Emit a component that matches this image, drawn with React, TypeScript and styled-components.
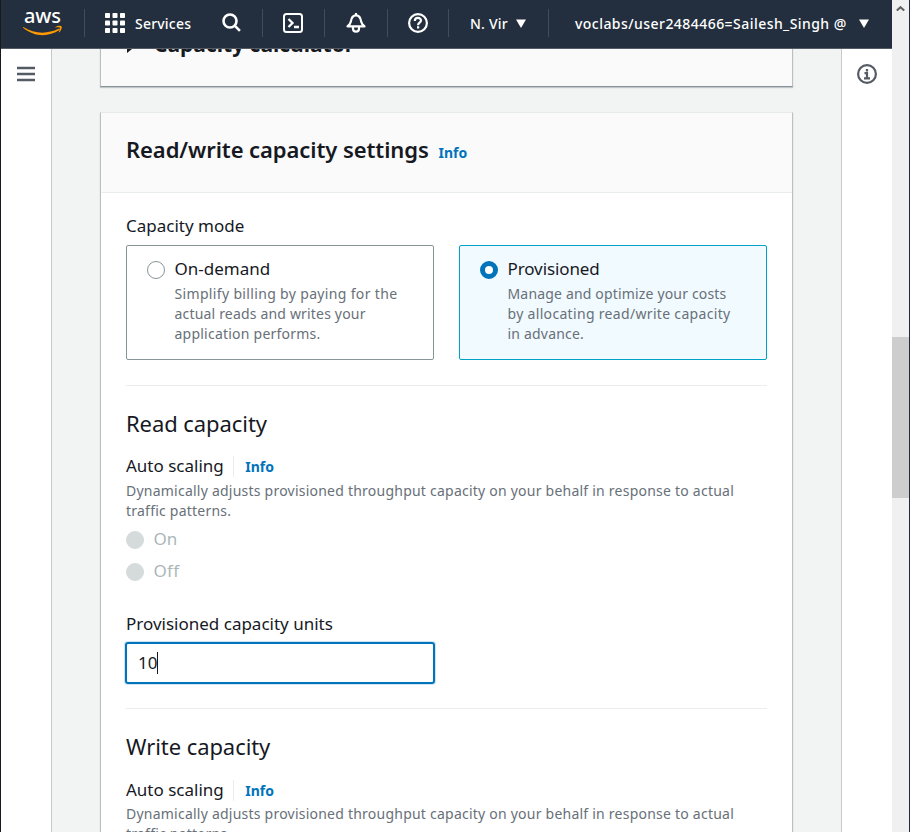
import React from "react";
import styled, { createGlobalStyle } from "styled-components";

const GlobalStyle = createGlobalStyle`
  * { box-sizing: border-box; }
  body { margin: 0; overflow: hidden; font-family: "Noto Sans", "Open Sans", sans-serif; color: #16191f; }
`;

const Page = styled.div`
  display: flex;
  width: 100vw;
  height: 832px;
  overflow: hidden;
  background: #fff;
  border-left: 1px solid #16191f;
  border-right: 1px solid #1c2b4a;
`;

const Console = styled.div`
  display: flex;
  flex-direction: column;
  flex: 1;
  min-width: 0;
`;

const TopNav = styled.header`
  display: flex;
  align-items: center;
  flex: none;
  height: 49px;
  padding: 0 0 2px 22px;
  background: #232f3e;
  border-bottom: 1px solid #545b64;
  color: #fff;
  font-size: 14px;
  font-weight: 500;
  line-height: 20px;
  white-space: nowrap;
  svg { display: block; flex: none; }
`;

const NavDivider = styled.span<{ $before: number; $after: number }>`
  flex: none;
  width: 1px;
  height: 28px;
  margin: 0 ${(p) => p.$after}px 0 ${(p) => p.$before}px;
  background: #414d5c;
`;

const NavLabel = styled.span<{ $gap: number; $spacing: number; $width: number }>`
  flex: none;
  width: ${(p) => p.$width}px;
  margin-left: ${(p) => p.$gap}px;
  letter-spacing: ${(p) => p.$spacing}px;
  padding-top: 1px;
`;

const Body = styled.div`
  display: flex;
  flex: 1;
  min-height: 0;
`;

const Rail = styled.aside<{ $side: "left" | "right" }>`
  flex: none;
  width: 51px;
  padding: ${(p) => (p.$side === "left" ? "17px 0 0 16px" : "15px 0 0 15px")};
  background: #fff;
  border: 0 solid #c5cacd;
  border-width: ${(p) => (p.$side === "left" ? "0 1px 0 0" : "0 0 0 1px")};
  svg { display: block; }
`;

const Main = styled.main`
  flex: 1;
  min-width: 0;
  padding: 0 48px;
  overflow: hidden;
  background: #f2f3f3;
`;

const Panel = styled.section`
  background: #fff;
  border: 1px solid #d5dbdb;
  border-color: #e6eaea #b9c0c3 #879196;
  box-shadow: 0 1px 1px rgba(0, 28, 36, 0.2);
`;

const CalculatorPanel = styled(Panel)`
  display: flex;
  align-items: flex-start;
  gap: 17px;
  height: 83px;
  margin-top: -45px;
  padding: 25px 26px;
  background: #fafafa;
  svg { flex: none; margin-top: 7px; }
`;

const CalculatorTitle = styled.h2`
  margin: 0;
  font-size: 21px;
  font-weight: 700;
  line-height: 28px;
`;

const SettingsPanel = styled(Panel)`
  margin-top: 25px;
  height: 1100px;
`;

const PanelHeader = styled.div`
  display: flex;
  align-items: baseline;
  height: 80px;
  padding: 22px 25px 0;
  background: #fafafa;
  border-bottom: 1px solid #eaeded;
`;

const PanelTitle = styled.h2`
  width: 312.5px;
  margin: 0;
  font-size: 22px;
  font-weight: 600;
  line-height: 28px;
  letter-spacing: -0.08px;
`;

const InfoLink = styled.a`
  color: #0073bb;
  font-size: 14px;
  font-weight: 700;
  line-height: 22px;
`;

const PanelBody = styled.div`
  padding: 22px 25px 0;
`;

const Label = styled.div<{ $spacing?: number }>`
  font-size: 17px;
  line-height: 22px;
  letter-spacing: ${(p) => p.$spacing ?? 0}px;
  white-space: nowrap;
`;

const Tiles = styled.div`
  display: grid;
  grid-template-columns: 308px 308px;
  gap: 25px;
  margin-top: 8px;
`;

const Tile = styled.div<{ $selected?: boolean }>`
  display: flex;
  gap: 9.5px;
  height: 115px;
  padding: 12px 20px;
  border: 1px solid ${(p) => (p.$selected ? "#00a1c9" : "#879596")};
  border-radius: 2px;
  background: ${(p) => (p.$selected ? "#f1faff" : "#fff")};
`;

const Radio = styled.span<{ $state?: "selected" | "disabled" }>`
  flex: none;
  width: 18px;
  height: 18px;
  margin-top: 3px;
  border-radius: 50%;
  border: ${(p) =>
    p.$state === "selected" ? "5px solid #0073bb" : p.$state === "disabled" ? "1px solid #d5dbdb" : "1px solid #879596"};
  background: ${(p) => (p.$state === "disabled" ? "#d5dbdb" : "#fff")};
`;

const Description = styled.div<{ $top: number }>`
  margin-top: ${(p) => p.$top}px;
  color: #687078;
  font-size: 14px;
  line-height: 20px;
  white-space: nowrap;
`;

const Line = styled.div<{ $spacing: number }>`
  letter-spacing: ${(p) => p.$spacing}px;
`;

const Rule = styled.hr<{ $top: number }>`
  height: 1px;
  margin: ${(p) => p.$top}px 0 0;
  border: 0;
  background: #eaeded;
`;

const SectionTitle = styled.h3`
  margin: 23px 0 0;
  font-size: 22px;
  font-weight: 400;
  line-height: 28px;
  letter-spacing: -0.07px;
`;

const ScalingHeader = styled.div<{ $top: number }>`
  display: flex;
  align-items: baseline;
  height: 22px;
  margin-top: ${(p) => p.$top}px;
`;

const LabelDivider = styled.span`
  align-self: flex-end;
  width: 1px;
  height: 21px;
  margin: 0 11px 0 9.4px;
  background: #eaeded;
`;

const RadioList = styled.div`
  display: grid;
  gap: 10px;
  margin-top: 7px;
`;

const RadioRow = styled.div`
  display: flex;
  gap: 9.5px;
  height: 22px;
  color: #aab7b8;
  ${Radio} { margin-top: 2.5px; }
`;

const UnitsLabel = styled(Label)`
  margin-top: 31px;
`;

const UnitsField = styled.div`
  display: flex;
  align-items: center;
  width: 310px;
  height: 42px;
  margin: 7px 0 0 -1px;
  padding-left: 11px;
  border: 2px solid #0073bb;
  border-radius: 3px;
  box-shadow: 0 0 0 1px rgba(0, 115, 187, 0.2);
  font-size: 17px;
  line-height: 22px;
`;

const Caret = styled.span`
  width: 1px;
  height: 22px;
  background: #16191f;
`;

const ScrollTrack = styled.div`
  flex: none;
  width: 17px;
  padding-top: 6px;
  background: #f0f0f0;
  svg { display: block; margin: 0 auto; }
`;

const ScrollThumb = styled.div`
  height: 161px;
  margin-top: 326px;
  background: #cdcdcd;
`;

const AwsLogo = () => (
  <svg width="42" height="30" viewBox="0 0 42 30" overflow="visible">
    <text x="1" y="15" fill="#fff" fontSize="20" fontWeight="500" textLength="37" fontFamily="Noto Sans, sans-serif">aws</text>
    <g transform="translate(-.7 -1.8)" fill="#f90">
      <path d="M1 20.8C12 27.7 25 28.2 36.3 22.6c1-.4 1.7.7.8 1.3C26 31.2 11.5 30.6 1.1 21.8c-.6-.6-.6-1.2-.1-1Z" />
      <path d="M33.2 20.7c2.2-1.5 5.3-1.4 6-.7.7.9-.3 4.5-2.2 6.1-.4.3-.7.1-.5-.3.7-1.6 1.4-3.8 1-4.3-.4-.6-2.5-.4-3.9-.2-.5 0-.7-.3-.4-.6Z" />
    </g>
  </svg>
);

const GridIcon = () => (
  <svg width="20" height="20" fill="#fff">
    {[0, 7.5, 15].map((y) => [0, 7.5, 15].map((x) => <rect key={`${x}-${y}`} x={x} y={y} width="5" height="5" rx=".8" />))}
  </svg>
);

const SearchIcon = () => (
  <svg width="20" height="20" fill="none" stroke="#fff" strokeWidth="2.6">
    <circle cx="8" cy="8" r="6.5" />
    <path d="m12.7 12.7 5.2 5.2" />
  </svg>
);

const ShellIcon = () => (
  <svg width="20" height="20" fill="none" stroke="#fff" strokeWidth="2">
    <rect x="1" y="1" width="18" height="18" rx="2.5" />
    <path d="m5.5 6 4 4-4 4M11 14h5" strokeWidth="2.3" />
  </svg>
);

const BellIcon = () => (
  <svg width="20" height="20" fill="none" stroke="#fff" strokeWidth="2.2" strokeLinejoin="round">
    <path d="M10 0v3M1.5 13.4h17c-2-1.7-2.9-2.7-3.3-4.6C14.7 5 13.2 2.3 10 2.3S5.3 5 4.8 8.8c-.4 1.9-1.3 2.9-3.3 4.6Z" />
    <path d="M7 14v1.8c0 3.7 6 3.7 6 0V14" />
  </svg>
);

const HelpIcon = () => (
  <svg width="20" height="20" fill="none" stroke="#fff" strokeWidth="2.2">
    <circle cx="10" cy="10" r="8.9" />
    <path d="M6.8 8C6.8 3.9 13 4 13 7.5c0 2.2-2.9 2.2-2.9 4.7M10.1 13.3v2.2" />
  </svg>
);

const Arrow = () => (
  <svg width="10" height="9"><path d="M0 .5h10L5 9Z" fill="#fff" /></svg>
);

interface CapacitySectionProps { title: string; headerTop: number; descriptionTop: number }

const CapacitySection = ({ title, headerTop, descriptionTop }: CapacitySectionProps) => (
  <>
    <SectionTitle>{title}</SectionTitle>
    <ScalingHeader $top={headerTop}>
      <Label>Auto scaling</Label>
      <LabelDivider />
      <InfoLink>Info</InfoLink>
    </ScalingHeader>
    <Description $top={descriptionTop}>
      <Line $spacing={0.23}>Dynamically adjusts provisioned throughput capacity on your behalf in response to actual</Line>
      <Line $spacing={0.23}>traffic patterns.</Line>
    </Description>
    <RadioList>
      <RadioRow><Radio $state="disabled" /><Label>On</Label></RadioRow>
      <RadioRow><Radio $state="disabled" /><Label $spacing={0.3}>Off</Label></RadioRow>
    </RadioList>
    <UnitsLabel>Provisioned capacity units</UnitsLabel>
    <UnitsField>10<Caret /></UnitsField>
  </>
);

export default function App() {
  return (
    <>
      <GlobalStyle />
      <Page>
        <Console>
          <TopNav>
            <AwsLogo />
            <NavDivider $before={19} $after={20} />
            <GridIcon />
            <NavLabel $gap={10} $spacing={0.2} $width={87}>Services</NavLabel>
            <SearchIcon />
            <NavDivider $before={20} $after={20} />
            <ShellIcon />
            <NavDivider $before={21} $after={21} />
            <BellIcon />
            <NavDivider $before={21} $after={20} />
            <HelpIcon />
            <NavDivider $before={20} $after={21} />
            <NavLabel $gap={0} $spacing={0.2} $width={46}>N. Vir</NavLabel>
            <Arrow />
            <NavDivider $before={22} $after={26} />
            <NavLabel $gap={0} $spacing={0.45} $width={284}>voclabs/user2484466=Sailesh_Singh @</NavLabel>
            <Arrow />
          </TopNav>
          <Body>
            <Rail $side="left">
              <svg width="18" height="16" stroke="#545b64" strokeWidth="2.4"><path d="M0 2h18M0 8h18M0 14h18" /></svg>
            </Rail>
            <Main>
              <CalculatorPanel>
                <svg width="10" height="16"><path d="M0 0v16l10-8Z" fill="#16191f" /></svg>
                <CalculatorTitle>Capacity calculator</CalculatorTitle>
              </CalculatorPanel>
              <SettingsPanel>
                <PanelHeader>
                  <PanelTitle>Read/write capacity settings</PanelTitle>
                  <InfoLink>Info</InfoLink>
                </PanelHeader>
                <PanelBody>
                  <Label>Capacity mode</Label>
                  <Tiles>
                    <Tile>
                      <Radio />
                      <div>
                        <Label>On-demand</Label>
                        <Description $top={4}>
                          <Line $spacing={0.34}>Simplify billing by paying for the</Line>
                          <Line $spacing={0.18}>actual reads and writes your</Line>
                          <Line $spacing={0.23}>application performs.</Line>
                        </Description>
                      </div>
                    </Tile>
                    <Tile $selected>
                      <Radio $state="selected" />
                      <div>
                        <Label $spacing={-0.1}>Provisioned</Label>
                        <Description $top={4}>
                          <Line $spacing={0.17}>Manage and optimize your costs</Line>
                          <Line $spacing={0.32}>by allocating read/write capacity</Line>
                          <Line $spacing={0.2}>in advance.</Line>
                        </Description>
                      </div>
                    </Tile>
                  </Tiles>
                  <Rule $top={25} />
                  <CapacitySection title="Read capacity" headerTop={18} descriptionTop={4} />
                  <Rule $top={24} />
                  <CapacitySection title="Write capacity" headerTop={19} descriptionTop={3} />
                </PanelBody>
              </SettingsPanel>
            </Main>
            <Rail $side="right">
              <svg width="20" height="20" fill="none" stroke="#545b64" strokeWidth="2.2">
                <circle cx="10" cy="10" r="8.9" />
                <path d="M10 5v2.4M7.5 9.2H10v5.2M7 14.4h6" />
              </svg>
            </Rail>
          </Body>
        </Console>
        <ScrollTrack>
          <svg width="9" height="5" fill="none" stroke="#606060" strokeWidth="2"><path d="m.8 4.6 3.7-3.4 3.7 3.4" /></svg>
          <ScrollThumb />
        </ScrollTrack>
      </Page>
    </>
  );
}
